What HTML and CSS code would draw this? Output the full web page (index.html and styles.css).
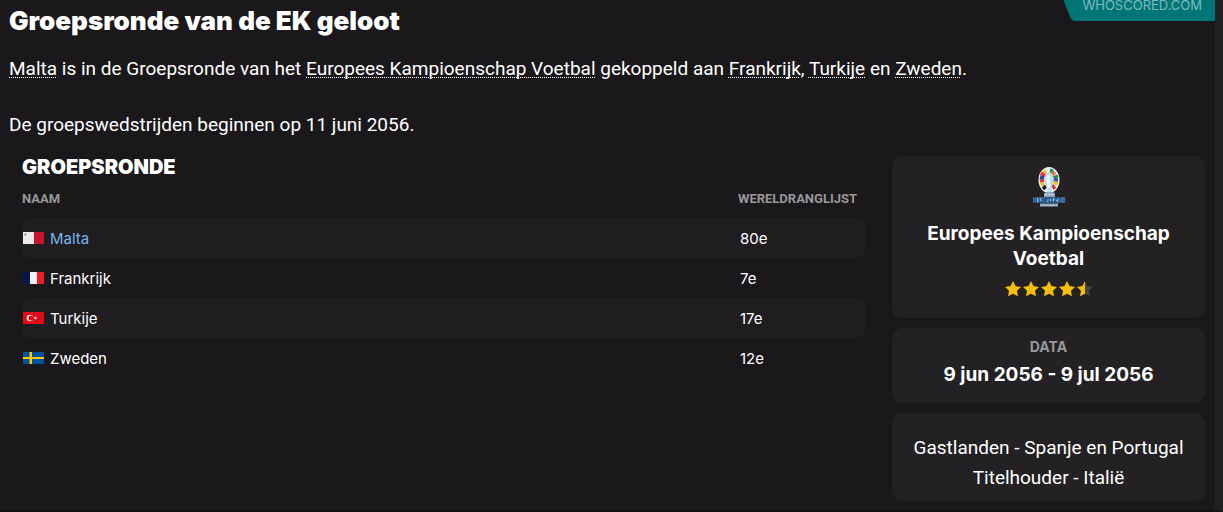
FILE: index.html
```html
<!DOCTYPE html>
<html lang="nl">
<head>
<meta charset="utf-8">
<title>Groepsronde van de EK geloot</title>
<link rel="stylesheet" href="styles.css">
</head>
<body>
<main class="page">
  <div class="source">WHOSCORED.COM</div>
  <article class="story">
    <h1 class="title">Groepsronde van de EK geloot</h1>
    <p><a href="#">Malta</a> is in de Groepsronde van het <a href="#">Europees Kampioenschap Voetbal</a> gekoppeld aan <a href="#">Frankrijk</a>, <a href="#">Turkije</a> en <a href="#">Zweden</a>.</p>
    <p>De groepswedstrijden beginnen op 11 juni 2056.</p>
  </article>
  <div class="columns">
    <section class="group">
      <h2 class="group-title">GROEPSRONDE</h2>
      <table class="ranking">
        <thead><tr><th>NAAM</th><th class="rank">WERELDRANGLIJST</th></tr></thead>
        <tbody>
          <tr><td><span class="team own"><svg class="flag" viewBox="0 0 21 12"><path fill="#ececec" d="M0 0h11v12H0z"/><path fill="#c8152f" d="M11 0h10v12H11z"/><path stroke="#b99a9d" d="M1 2.500h3M2.500 1v3"/></svg>Malta</span></td><td>80e</td></tr>
          <tr><td><span class="team"><svg class="flag" viewBox="0 0 21 12"><path fill="#07174b" d="M0 0h7v12H0z"/><path fill="#f2f2f4" d="M7 0h7v12H7z"/><path fill="#ee1c2b" d="M14 0h7v12h-7z"/></svg>Frankrijk</span></td><td>7e</td></tr>
          <tr><td><span class="team"><svg class="flag" viewBox="0 0 21 12"><path fill="#e30a17" d="M0 0h21v12H0z"/><circle cx="7" cy="6" r="3.300" fill="#fff"/><circle cx="8" cy="6" r="2.600" fill="#e30a17"/><path fill="#fff" d="M10.500 6l1.300-.5.1-1.300.9 1.100 1.300-.3-.8 1 .8 1-1.300-.3-.9 1.100-.1-1.300z"/></svg>Turkije</span></td><td>17e</td></tr>
          <tr><td><span class="team"><svg class="flag" viewBox="0 0 21 12"><path fill="#00529b" d="M0 0h21v12H0z"/><path fill="#fecb00" d="M6.500 0H9v5h12v2H9v5H6.500V7H0V5h6.500z"/></svg>Zweden</span></td><td>12e</td></tr>
        </tbody>
      </table>
    </section>
    <aside class="cards">
      <section class="card event">
        <svg class="cup" viewBox="0 0 34 42" role="img" aria-label="EURO 2024">
          <ellipse cx="17" cy="13" rx="10.500" ry="13" fill="#f3f5f6"/>
          <g fill="none" stroke-width="3.500">
            <path stroke="#f6c945" d="M12 3l2 4"/><path stroke="#1b9b62" d="M20 2l-1 4"/>
            <path stroke="#e6333d" d="M9 6l4 3M8 14l4-1"/><path stroke="#29458b" d="M8 10l4 1"/>
            <path stroke="#e9b82f" d="M9 18l3-2"/><path stroke="#222" d="M11 22l3-3"/>
            <path stroke="#ec7130" d="M23 5l-3 3"/><path stroke="#238753" d="M26 9l-5 2"/>
            <path stroke="#35559d" d="M26 13h-5"/><path stroke="#edc439" d="M26 17l-5-2"/>
            <path stroke="#d63f42" d="M23 22l-3-4"/>
          </g>
          <path fill="#b9dff0" d="M14 7q3-4 6 0l2 5-2 6-1 7h-4l-1-7-2-6z"/>
          <path fill="#eef7fa" d="M15 9q2-2 3 0v12h-3z"/>
          <path fill="#8fa9c4" d="M12 26l3-1h5l3 1v4H12z"/>
          <path stroke="#dbe6ef" d="M13 27.500h2m1 0h2m1 0h2"/>
          <path stroke="#8eaccb" stroke-width="5" d="M1 33h32"/>
          <path fill="none" stroke="#174d87" stroke-width="1.300" d="M5 31H2v4h3M2 33h3M7 30v5h3v-5M12 36v-5h3v2h-3l3 3M17 31h3v4h-3zM22 31h3l-3 4h3M27 31v4h2v-4zM31 31v3h2v-3"/>
          <path stroke="#8fa3b9" stroke-width="3" d="M8 38h18"/>
          <path stroke="#c3cfda" stroke-dasharray="2 1" d="M9 38.500h16"/>
        </svg>
        <h3 class="event-name">Europees Kampioenschap Voetbal</h3>
        <svg class="stars" viewBox="0 0 90 18" role="img" aria-label="4,5 van 5 sterren">
          <defs><path id="star" d="M9 1l2.500 5.100 5.500.8-4 3.900 1 5.500-5-2.600-5 2.600 1-5.500-4-3.900 5.500-.8z"/></defs>
          <g fill="#f7bd0b"><use href="#star"/><use href="#star" x="18"/><use href="#star" x="36"/><use href="#star" x="54"/></g>
          <use href="#star" x="72" fill="#434144"/>
          <path fill="#f7bd0b" d="M81 1v12.700l-5 2.600 1-5.500-4-3.900 5.500-.8z"/>
        </svg>
      </section>
      <section class="card dates">
        <h4 class="label">DATA</h4>
        <p class="period">9 jun 2056 - 9 jul 2056</p>
      </section>
      <section class="card facts">
        <p>Gastlanden - Spanje en Portugal</p>
        <p>Titelhouder - Italië</p>
      </section>
    </aside>
  </div>
</main>
</body>
</html>
```
FILE: styles.css
```css
* { box-sizing: border-box; }
body {
  margin: 0;
  background: #1a181b;
  color: #fff;
  font-family: Inter, "Liberation Sans", sans-serif;
}
h1, h2, h3, h4, p { margin: 0; }
.page {
  position: relative;
  min-height: 100vh;
  border-right: 8px solid #212022;
  border-bottom: 2px solid #131214;
  padding: 5px 10px 9px 9px;
}
.source {
  position: absolute;
  top: 0;
  right: 0;
  height: 21px;
  padding: 0 13px 0 19px;
  background: #007578;
  clip-path: polygon(0 0, 7px 18px, 10px 21px, 100% 21px, 100% 0);
  color: #7fb9b8;
  font-size: 13px;
  line-height: 10px;
}
.title { font-size: 26px; font-weight: 900; line-height: 32px; }
.story p, .facts {
  font-family: Roboto, "Liberation Sans", sans-serif;
  font-size: 19px;
}
.story p { margin-top: 18px; line-height: 28px; }
.story p + p { margin-top: 28px; }
.story a {
  color: inherit;
  text-decoration: underline dotted 1px;
  text-underline-offset: 2px;
  text-decoration-skip-ink: none;
}
.columns { display: flex; gap: 27px; margin-top: 17px; }
.group { flex: 1; padding-left: 13px; }
.group-title { font-size: 20px; font-weight: 900; line-height: 22px; }
.ranking {
  width: 100%;
  border-collapse: separate;
  border-spacing: 0;
  font-size: 15px;
}
.ranking th {
  height: 40px;
  padding: 0;
  color: #999799;
  font-family: Roboto, "Liberation Sans", sans-serif;
  font-size: 13px;
  font-weight: 700;
  text-align: left;
}
.ranking .rank { width: 127px; }
.ranking td { height: 40px; padding: 0; }
.ranking td + td { padding-left: 2px; }
.ranking tbody tr:nth-child(odd) td { background: #1f1d20; }
.ranking td:first-child { border-radius: 8px 0 0 8px; }
.ranking td:last-child { border-radius: 0 8px 8px 0; }
.team { display: flex; align-items: center; gap: 6px; padding-left: 1px; }
.own { color: #77b6ed; }
.flag { width: 21px; height: 12px; }
.cards { display: flex; flex-direction: column; gap: 10px; width: 313px; }
.card { border-radius: 10px; background: #232124; text-align: center; }
.event { display: flex; flex-direction: column; align-items: center; padding: 11px 16px 20px; }
.cup { width: 34px; height: 42px; }
.event-name { margin-top: 12px; font-size: 19px; line-height: 25px; }
.stars { width: 90px; height: 18px; margin-top: 9px; }
.dates { padding: 9px 16px 14px; }
.label { color: #999799; font-size: 14px; line-height: 20px; }
.period { margin-top: 3px; font-size: 19px; font-weight: 700; line-height: 29px; }
.facts { padding: 20px 8px 8px; line-height: 30px; }
```
